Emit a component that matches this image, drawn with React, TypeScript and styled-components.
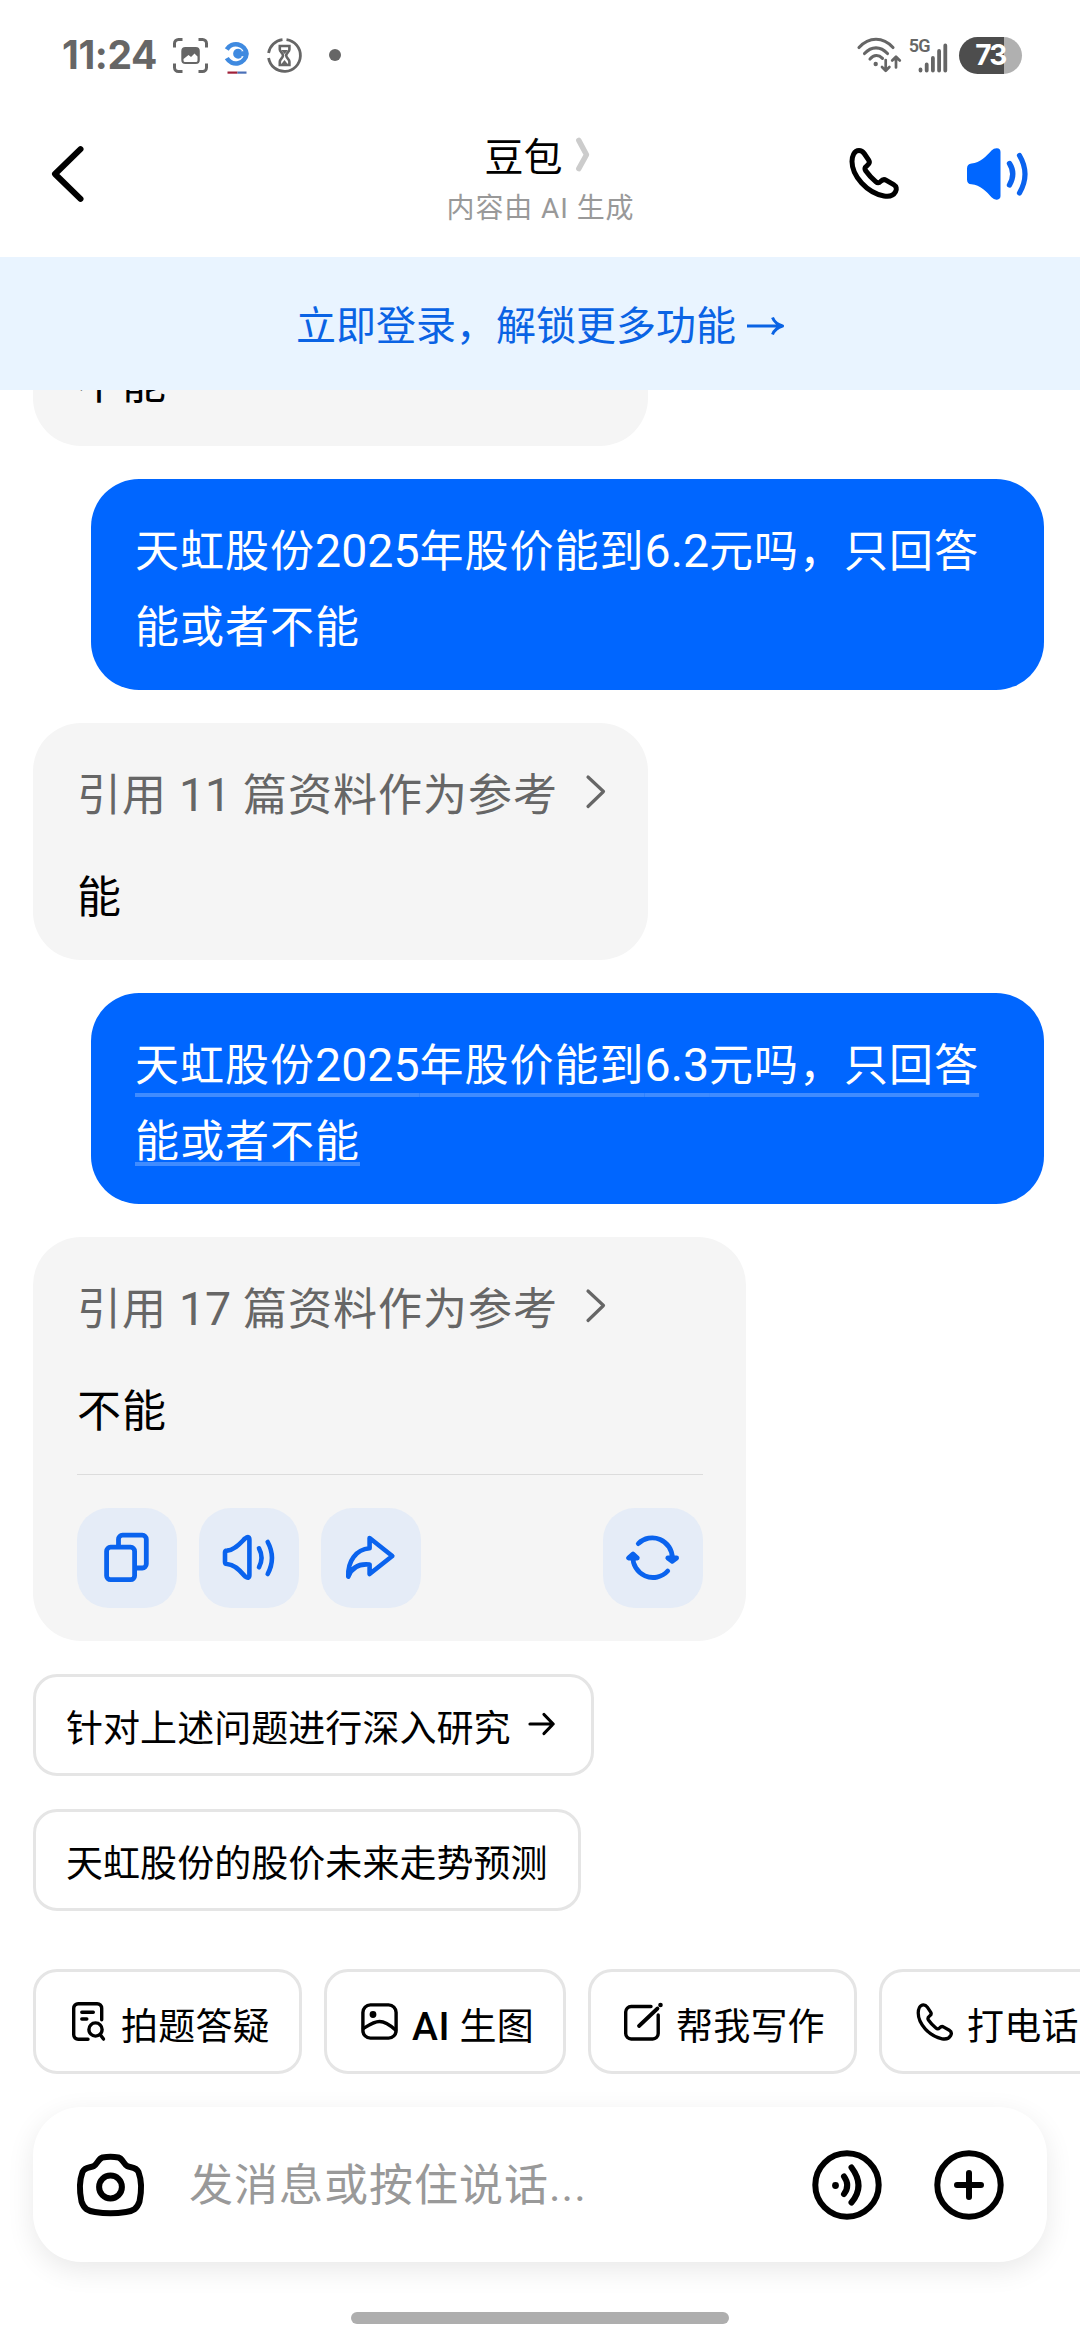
import React from 'react';
import styled, { createGlobalStyle } from 'styled-components';

const GlobalStyle = createGlobalStyle`
  * { box-sizing: border-box; }
  html, body { margin: 0; padding: 0; background: #fff; }
  body { font-family: Roboto, "Noto Sans CJK SC", sans-serif; color: #000; overflow: hidden; }
  button { font: inherit; color: inherit; border: 0; background: none; padding: 0; margin: 0; }
`;

const Screen = styled.div`
  width: 1080px;
  height: 2340px;
  display: flex;
  flex-direction: column;
  background: #fff;
  overflow: hidden;
`;

const Svg = styled.svg<{ $w: number; $h: number }>`
  display: block;
  flex: none;
  width: ${(p) => p.$w}px;
  height: ${(p) => p.$h}px;
  overflow: visible;
`;

/* ---------- status bar ---------- */

const StatusBar = styled.div`
  height: 110px;
  flex: none;
  display: flex;
  align-items: center;
  justify-content: space-between;
  padding: 0 58px 0 62px;
`;

const StatusGroup = styled.div`
  display: flex;
  align-items: center;
`;

const Clock = styled.span`
  width: 111px;
  font: 700 39px/48px Inter, sans-serif;
  letter-spacing: -0.4px;
  color: #666;
  white-space: nowrap;
`;

const NotificationDot = styled.span`
  width: 12px;
  height: 12px;
  border-radius: 50%;
  background: #666;
  margin-left: 27px;
`;

const NetworkLabel = styled.span`
  font: 600 18px/18px Roboto, sans-serif;
  letter-spacing: -0.6px;
  color: #666;
  margin: -18px 0 0 8px;
`;

const Battery = styled.span`
  width: 63px;
  height: 37px;
  margin-left: 12px;
  border-radius: 19px;
  display: flex;
  align-items: center;
  justify-content: center;
  background: linear-gradient(90deg, #4d4d4d 45.5px, #b0b0b0 45.5px);
  color: #fff;
  font: 700 28px/37px Inter, sans-serif;
  letter-spacing: -1.6px;
`;

/* ---------- header ---------- */

const Header = styled.header`
  height: 147px;
  flex: none;
  display: grid;
  grid-template-columns: 240px 1fr 240px;
`;

const BackArea = styled.button`
  display: flex;
  align-items: center;
  padding: 0 0 20px 51px;
`;

const TitleArea = styled.div`
  display: flex;
  flex-direction: column;
  align-items: center;
  padding-top: 18px;
`;

const TitleRow = styled.div`
  display: flex;
  align-items: center;
  gap: 13px;
  height: 57px;
  padding: 2px 6px 0 0;
  font-size: 39px;
  line-height: 56px;
`;

const Subtitle = styled.div`
  margin-top: 4px;
  padding-left: 1px;
  font-size: 28px;
  line-height: 40px;
  letter-spacing: 0.9px;
  color: #999;
`;

const HeaderActions = styled.div`
  display: flex;
  justify-content: flex-end;
  padding: 38px 51px 0 0;
  gap: 67px;
`;

const LoginBanner = styled.div`
  height: 133px;
  flex: none;
  display: flex;
  align-items: center;
  justify-content: center;
  gap: 11px;
  padding-top: 7px;
  background: #e9f4ff;
  color: #0a63e4;
  font-size: 40px;
  line-height: 60px;
`;

/* ---------- conversation ---------- */

const Chat = styled.main`
  flex: 1;
  min-height: 0;
  overflow: hidden;
  display: flex;
  flex-direction: column;
  justify-content: flex-end;
  align-items: flex-start;
  gap: 33px;
  padding: 0 36px 0 33px;
  font-size: 44px;
  line-height: 76px;
  letter-spacing: 1px;
`;

const AnswerBubble = styled.article<{ $wide?: boolean }>`
  flex: none;
  width: ${(p) => (p.$wide ? 713 : 615)}px;
  padding: 35px 43px ${(p) => (p.$wide ? 33 : 24)}px 44px;
  border-radius: 48px;
  background: #f5f5f5;
`;

const Reference = styled.div`
  display: flex;
  align-items: center;
  gap: 28px;
  height: 76px;
  color: #666;
  white-space: nowrap;
`;

const Answer = styled.div`
  margin-top: 26px;
  height: 76px;
`;

const Digits = styled.span`
  font-size: 46.5px;
  line-height: 1;
  letter-spacing: 0;
`;

const QuestionBubble = styled.article`
  flex: none;
  align-self: flex-end;
  width: 953px;
  height: 211px;
  padding: 35px 0 0 44px;
  border-radius: 48px;
  background: #0066ff;
  color: #fff;
  white-space: nowrap;
`;

const Line = styled.span<{ $underline?: number }>`
  display: block;
  width: fit-content;
  height: 76px;
  text-decoration: ${(p) => (p.$underline ? 'underline' : 'none')};
  text-decoration-color: #408cff;
  text-decoration-thickness: 4px;
  text-decoration-skip-ink: none;
  text-underline-offset: ${(p) => p.$underline ?? 0}px;
`;

const BubbleActions = styled.div`
  margin-top: 24px;
  padding-top: 33px;
  border-top: 1px solid #dcdcdc;
  display: flex;
  gap: 22px;
`;

const ActionButton = styled.button<{ $last?: boolean }>`
  width: 100px;
  height: 100px;
  border-radius: 32px;
  background: #e5ecf7;
  color: #0a63ee;
  margin-left: ${(p) => (p.$last ? 'auto' : '0')};
`;

const Suggestion = styled.button<{ $linked?: boolean }>`
  flex: none;
  height: 102px;
  display: flex;
  align-items: center;
  gap: 17px;
  padding: 0 ${(p) => (p.$linked ? 36 : 30)}px 0 30px;
  border: 3px solid #e5e5e5;
  border-radius: 24px;
  font-size: 37px;
  line-height: 56px;
  letter-spacing: 0.05px;
`;

const SuggestionText = styled.span`
  padding-top: 10px;
`;

/* ---------- bottom area ---------- */

const Shortcuts = styled.div`
  flex: none;
  display: flex;
  gap: 22px;
  padding: 58px 0 33px 33px;
  overflow: hidden;
`;

const Shortcut = styled.button<{ $width: number }>`
  flex: none;
  width: ${(p) => p.$width}px;
  height: 105px;
  display: flex;
  align-items: center;
  gap: 13px;
  padding-left: 33px;
  border: 3px solid #e5e5e5;
  border-radius: 24px;
  font-size: 37px;
  letter-spacing: 0.2px;
  white-space: nowrap;
`;

const ShortcutIcon = styled.span`
  width: 39px;
  flex: none;
  display: flex;
  justify-content: center;
`;

const ShortcutText = styled.span`
  padding-top: 4px;
`;

const Latin = styled.span`
  font-size: 39px;
  font-weight: 500;
  line-height: 1;
  letter-spacing: 0.6px;
`;

const Composer = styled.div`
  flex: none;
  width: 1014px;
  height: 155px;
  margin-left: 33px;
  padding: 0 43px 0 44px;
  display: flex;
  align-items: center;
  border-radius: 48px;
  background: #fff;
  box-shadow: 0 8px 28px rgba(0, 0, 0, 0.09);
`;

const Placeholder = styled.span`
  flex: 1;
  margin-left: 45px;
  padding-top: 2px;
  font-size: 44px;
  line-height: 60px;
  letter-spacing: 1px;
  color: #999;
`;

const ComposerActions = styled.div`
  display: flex;
  gap: 52px;
`;

const HomeIndicator = styled.div`
  flex: none;
  width: 378px;
  height: 12px;
  margin: 50px auto 16px;
  border-radius: 6px;
  background: #aeaeae;
`;

/* ---------- icons ---------- */

const stroke = (width: number) => ({
  fill: 'none',
  stroke: 'currentColor',
  strokeWidth: width,
  strokeLinecap: 'round' as const,
  strokeLinejoin: 'round' as const,
});

const ScreenshotIcon = () => (
  <Svg $w={35} $h={35} viewBox="0 0 35 35">
    <path
      d="M1.5 9.5V5.5a4 4 0 0 1 4-4h4M25.500 1.500h4a4 4 0 0 1 4 4v4M33.500 25.500v4a4 4 0 0 1-4 4h-4M9.500 33.500h-4a4 4 0 0 1-4-4v-4"
      fill="none"
      stroke="#666"
      strokeWidth="3"
    />
    <rect x="8.300" y="9" width="18.500" height="17" rx="4" fill="#666" />
    <path d="M10.500 21l5-4 2.500 2 3.500-3.500 3 3v4a1.500 1.500 0 0 1-1.500 1.500h-11a1.500 1.500 0 0 1-1.500-1.500z" fill="#fff" />
  </Svg>
);

const BrandIcon = () => (
  <Svg $w={24} $h={36} viewBox="0 0 24 36">
    <path d="M1.800 9.500A10.600 10.600 0 0 1 21.500 13.700A10.600 10.600 0 0 1 1.800 18.200" fill="none" stroke="#3f8ae0" strokeWidth="4.600" />
    <path d="M16.800 10.300A5 5 0 1 0 16.800 17.100L14.800 13.700Z" fill="#3f8ae0" />
    <path d="M12 11.200h10v5h-10z" fill="#3f8ae0" />
    <path d="M2.500 32.600h10" stroke="#a02038" strokeWidth="2.200" />
    <path d="M12.500 32.600h9" stroke="#4a70b8" strokeWidth="2.200" />
  </Svg>
);

const HourglassIcon = () => (
  <Svg $w={35} $h={35} viewBox="0 0 35 35">
    <g fill="none" stroke="#666">
      <path d="M19.500 1.600a16 16 0 1 1-17.900 18.400M1.600 15A16 16 0 0 1 15.500 1.600" strokeWidth="2.800" />
      <path d="M12.800 8h9.600v3.400c0 2.400-3.200 3.600-3.200 6.100s3.200 3.800 3.200 6.200V27h-9.600v-3.300c0-2.400 3.200-3.700 3.200-6.200s-3.200-3.700-3.200-6.100z" strokeWidth="2.600" />
    </g>
    <path d="M14 12h7l-3.400 4zM14 26.500l3.500-4.500 3.500 4.500z" fill="#666" />
  </Svg>
);

const WifiIcon = () => (
  <Svg $w={44} $h={36} viewBox="0 0 44 36">
    <g fill="none" stroke="#666" strokeWidth="3.100" strokeLinecap="round" strokeLinejoin="round">
      <path d="M2 10.500C12-.5 26-.5 36 10.500" />
      <path d="M7.500 16.500c7-7.500 16-7.500 23 0" />
      <path d="M13 22c4-4.500 8.500-4.700 12.500-.600" />
      <path d="M28.700 23v10M25 30l3.700 3.700 3.700-3.700M39 30.500v-10M35.200 23.500l3.800-3.800 3.800 3.800" strokeWidth="2.700" />
    </g>
    <circle cx="18.700" cy="27" r="2.200" fill="#666" />
  </Svg>
);

const SignalIcon = () => (
  <Svg $w={28} $h={36} viewBox="0 0 28 36">
    <path d="M1.500 31.500v1M7.700 26.500v6M13.900 20v12.500M20.100 13v19.500M26.300 7.500v25" stroke="#666" strokeWidth="3.800" strokeLinecap="round" />
  </Svg>
);

const BackIcon = () => (
  <Svg $w={33} $h={58} viewBox="0 0 33 58" {...stroke(6)}>
    <path d="M29.500 4.200L4 29l25.500 24.800" />
  </Svg>
);

const TitleChevron = () => (
  <Svg $w={14} $h={42} viewBox="0 0 14 42" fill="none" stroke="#ccc" strokeWidth="5.4" strokeLinecap="round" strokeLinejoin="round">
    <path d="M2.800 3.400L10.500 17.700L2.800 31.600" />
  </Svg>
);

const PHONE =
  'M2.500 13.500c0-5 2-11 7-11 2.500 0 4 1.300 5.200 3l4.500 6.700c1.600 2.500.3 4-1.500 5.300-2.200 1.700-3 3-1.500 5.300 2.800 4 6.300 7.700 10 10.800 2 1.800 3.300 1.600 5-.2 1.700-1.900 3.400-2.400 5.600-1.100l7.400 4.300c2.800 1.700 3.300 4.500 1.800 7.200-2.400 4.400-7 5-11.500 4.200C17.500 44.800 2.500 28 2.500 13.500z';

const PhoneIcon = ({ size, width }: { size: number; width: number }) => (
  <Svg $w={size} $h={size} viewBox="0 0 50 51" {...stroke(width)}>
    <path d={PHONE} />
  </Svg>
);

const SpeakerFilledIcon = () => (
  <Svg $w={62} $h={52} viewBox="0 0 62 52">
    <path
      d="M0 20.500q0-4.500 4.500-4.900C13 15 20 7.500 24.500 2.500Q27 0 30 0.200Q33.500.5 33.500 4V48Q33.500 51.300 30 51.700Q27 52 24.500 49.300C20 44 13 36.800 4.500 36.300Q0 36 0 31.500z"
      fill="#0066ff"
    />
    <g fill="none" stroke="#0b63ee" strokeLinecap="round">
      <path d="M42.500 15.500q6.500 10 0 21.500" strokeWidth="5.400" />
      <path d="M52.500 7.500q11 18.500 0 37.500" strokeWidth="5.200" />
    </g>
  </Svg>
);

const LongArrow = () => (
  <Svg $w={37} $h={26} viewBox="0 0 37 26" {...stroke(3)} strokeLinecap="butt">
    <path d="M0 12h35.500M25.500 3.500c1.500 3.800 5 7 10 8.500c-5 1.500-8.500 4.700-10 8.500" />
  </Svg>
);

const ReferenceChevron = () => (
  <Svg $w={20} $h={42} viewBox="0 0 20 42" {...stroke(3.2)}>
    <path d="M2 2L17.500 16.500L2 31.500" />
  </Svg>
);

const CopyIcon = () => (
  <Svg $w={100} $h={100} viewBox="0 0 100 100" {...stroke(4.8)}>
    <rect x="29.600" y="39.200" width="28" height="32.500" rx="4" />
    <path d="M41.500 38v-6.800a4 4 0 0 1 4-4h19.800a4 4 0 0 1 4 4v24.800a4 4 0 0 1-4 4h-6" />
  </Svg>
);

const SpeakIcon = () => (
  <Svg $w={100} $h={100} viewBox="0 0 100 100" {...stroke(4.6)}>
    <path d="M26 44.500q0-1.800 2-1.900C36 42 41.500 35 46 30.500q4.300-3.200 4.400 1V67.300q-.1 4.200-4.400 1C41.500 63.500 36 56.400 28 56q-2 0-2-1.900z" />
    <path d="M60 40.300q5 9 0 19" />
    <path d="M68.700 34q8.500 15.800 0 32" />
  </Svg>
);

const ShareIcon = () => (
  <Svg $w={100} $h={100} viewBox="0 0 100 100" {...stroke(4.6)}>
    <path d="M48.600 30L71.300 48L48.600 66V56.600C38 55.500 30.500 60 27.300 68.600C26.500 53 35 41.500 48.600 40.300z" />
  </Svg>
);

const RefreshIcon = () => (
  <Svg $w={100} $h={100} viewBox="0 0 100 100" {...stroke(4.8)}>
    <path d="M35.300 35.600A20 20 0 0 1 69.300 50" />
    <path d="M64.700 63A20 20 0 0 1 30 48" />
    <path d="M64.800 50h8.800l-4.400 3.200zM25.500 50h8.800L30 46z" fill="currentColor" />
  </Svg>
);

const SmallArrow = () => (
  <Svg $w={27} $h={28} viewBox="0 0 27 28" {...stroke(3.2)}>
    <path d="M2 13h23M16 3.500L25.200 13L16 22.500" />
  </Svg>
);

const SearchDocIcon = () => (
  <Svg $w={33} $h={39} viewBox="0 0 33 39" {...stroke(3.4)}>
    <path d="M16 37.300H6.200a4.500 4.500 0 0 1-4.500-4.500V6.200a4.500 4.500 0 0 1 4.500-4.500h19a4.500 4.500 0 0 1 4.500 4.500v11.500" />
    <path d="M9.800 10.300h11.500M9.800 17h5" />
    <circle cx="23.500" cy="27.500" r="6.600" />
    <path d="M28.300 32.800l3.200 4.300" />
  </Svg>
);

const PictureIcon = () => (
  <Svg $w={37} $h={37} viewBox="0 0 37 37" {...stroke(3.4)}>
    <rect x="1.900" y="1.900" width="33.200" height="33.200" rx="7.500" />
    <path d="M2.500 25.500C8 22 13 18.500 18.500 18.500S29 22 34.500 27" />
    <circle cx="12" cy="11.500" r="1.700" fill="currentColor" />
  </Svg>
);

const ComposeIcon = () => (
  <Svg $w={39} $h={38} viewBox="0 0 39 38" {...stroke(3.4)}>
    <path d="M27 3.500H7.200a5.500 5.500 0 0 0-5.500 5.500v21.500a5.500 5.500 0 0 0 5.500 5.500h21.500a5.500 5.500 0 0 0 5.500-5.500V12" />
    <path d="M15 23L33.500 5.500" strokeWidth="3.800" />
    <circle cx="36.500" cy="2" r="2.300" fill="currentColor" stroke="none" />
  </Svg>
);

const CameraIcon = () => (
  <Svg $w={67} $h={62} viewBox="0 0 67 62" {...stroke(6)}>
    <path d="M25.500 3.500Q33.500 2.200 41.500 3.500C45.500 4.500 46.500 10 50 12c4 2 9 .5 11.500 6C64.500 26 64.500 38 62.500 47.500C60 55 56 57 49 58Q33.500 60.500 18 58C11 57 7 55 4.500 47.500C2.500 38 2.500 26 5.500 18C8 12.500 13 14 17 12C20.500 10 21.500 4.500 25.500 3.500z" />
    <circle cx="33.500" cy="33" r="11.400" />
  </Svg>
);

const VoiceIcon = () => (
  <Svg $w={70} $h={70} viewBox="0 0 70 70" {...stroke(6)}>
    <circle cx="35" cy="35" r="31.700" />
    <circle cx="23.500" cy="35.500" r="3.400" fill="currentColor" stroke="none" />
    <path d="M32 26.500q6.500 9 0 17.500" />
    <path d="M39.500 17.500q14 18.500 0 35" />
  </Svg>
);

const PlusIcon = () => (
  <Svg $w={70} $h={70} viewBox="0 0 70 70" {...stroke(6)}>
    <circle cx="35" cy="35" r="31.700" />
    <path d="M35 23v24M23 35h24" />
  </Svg>
);

const IconSlot = styled.span<{ $left?: number; $top?: number }>`
  display: block;
  flex: none;
  margin-left: ${(p) => p.$left ?? 0}px;
  margin-top: ${(p) => p.$top ?? 0}px;
`;

const ReferenceLine = ({ count }: { count: number }) => (
  <Reference>
    <span>引用 <Digits>{count}</Digits> 篇资料作为参考</span>
    <ReferenceChevron />
  </Reference>
);

const Question = ({ price, underlined }: { price: string; underlined?: boolean }) => (
  <QuestionBubble>
    <Line $underline={underlined ? 12 : undefined}>
      天虹股份<Digits>2025</Digits>年股价能到<Digits>{price}</Digits>元吗，只回答
    </Line>
    <Line $underline={underlined ? 5 : undefined}>能或者不能</Line>
  </QuestionBubble>
);

export default function App() {
  return (
    <>
      <GlobalStyle />
      <Screen>
        <StatusBar>
          <StatusGroup>
            <Clock>11:24</Clock>
            <ScreenshotIcon />
            <IconSlot $left={17} $top={6}><BrandIcon /></IconSlot>
            <IconSlot $left={18}><HourglassIcon /></IconSlot>
            <NotificationDot />
          </StatusGroup>
          <StatusGroup>
            <WifiIcon />
            <NetworkLabel>5G</NetworkLabel>
            <IconSlot $left={-11} $top={2}><SignalIcon /></IconSlot>
            <Battery>73</Battery>
          </StatusGroup>
        </StatusBar>

        <Header>
          <BackArea aria-label="返回"><BackIcon /></BackArea>
          <TitleArea>
            <TitleRow>
              <span>豆包</span>
              <TitleChevron />
            </TitleRow>
            <Subtitle>内容由 AI 生成</Subtitle>
          </TitleArea>
          <HeaderActions>
            <PhoneIcon size={51} width={5} />
            <SpeakerFilledIcon />
          </HeaderActions>
        </Header>

        <LoginBanner>
          <span>立即登录，解锁更多功能</span>
          <LongArrow />
        </LoginBanner>

        <Chat>
          <AnswerBubble>
            <Answer>不能</Answer>
          </AnswerBubble>
          <Question price="6.2" />
          <AnswerBubble>
            <ReferenceLine count={11} />
            <Answer>能</Answer>
          </AnswerBubble>
          <Question price="6.3" underlined />
          <AnswerBubble $wide>
            <ReferenceLine count={17} />
            <Answer>不能</Answer>
            <BubbleActions>
              <ActionButton aria-label="复制"><CopyIcon /></ActionButton>
              <ActionButton aria-label="朗读"><SpeakIcon /></ActionButton>
              <ActionButton aria-label="分享"><ShareIcon /></ActionButton>
              <ActionButton $last aria-label="重新生成"><RefreshIcon /></ActionButton>
            </BubbleActions>
          </AnswerBubble>
          <Suggestion $linked>
            <SuggestionText>针对上述问题进行深入研究</SuggestionText>
            <SmallArrow />
          </Suggestion>
          <Suggestion>
            <SuggestionText>天虹股份的股价未来走势预测</SuggestionText>
          </Suggestion>
        </Chat>

        <Shortcuts>
          <Shortcut $width={269}>
            <ShortcutIcon><SearchDocIcon /></ShortcutIcon>
            <ShortcutText>拍题答疑</ShortcutText>
          </Shortcut>
          <Shortcut $width={242}>
            <ShortcutIcon><PictureIcon /></ShortcutIcon>
            <ShortcutText><Latin>AI</Latin> 生图</ShortcutText>
          </Shortcut>
          <Shortcut $width={269}>
            <ShortcutIcon><ComposeIcon /></ShortcutIcon>
            <ShortcutText>帮我写作</ShortcutText>
          </Shortcut>
          <Shortcut $width={269}>
            <ShortcutIcon><PhoneIcon size={38} width={4.4} /></ShortcutIcon>
            <ShortcutText>打电话</ShortcutText>
          </Shortcut>
        </Shortcuts>

        <Composer>
          <CameraIcon />
          <Placeholder>发消息或按住说话...</Placeholder>
          <ComposerActions>
            <VoiceIcon />
            <PlusIcon />
          </ComposerActions>
        </Composer>
        <HomeIndicator />
      </Screen>
    </>
  );
}
